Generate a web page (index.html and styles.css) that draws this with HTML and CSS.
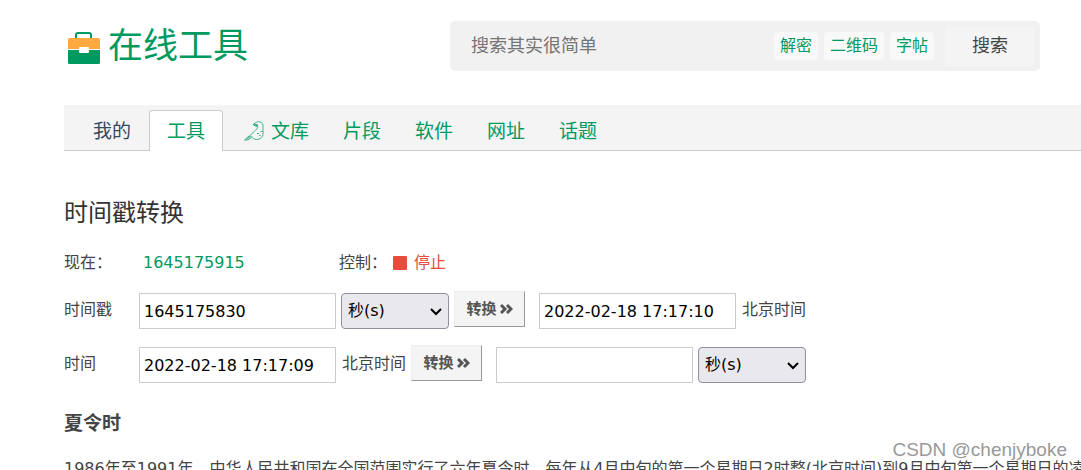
FILE: index.html
```html
<!DOCTYPE html>
<html lang="zh-CN">
<head>
  <meta charset="UTF-8">
  <meta name="viewport" content="width=device-width, initial-scale=1.0">
  <title>时间戳转换 - 在线工具</title>
  <link rel="stylesheet" href="styles.css">
</head>
<body>
  <header class="header">
    <a class="logo" href="#">
      <svg width="34" height="34" viewBox="0 0 34 34" aria-hidden="true">
        <path d="M10 7V4q0-2 2-2h11q2 0 2 2v3" fill="none" stroke="#009a61" stroke-width="2"/>
        <path d="M2 18V8.500Q2 7 3.500 7h29Q34 7 34 8.500V18z" fill="#ffa940"/>
        <path d="M2 19h32v12.500q0 1.500-1.500 1.500h-29Q2 33 2 31.500z" fill="#009a61"/>
        <rect x="13" y="16" width="10" height="6" rx="1" fill="#fff"/>
      </svg>
      <span>在线工具</span>
    </a>
    <form class="search">
      <input class="search-input" type="text" placeholder="搜索其实很简单" aria-label="搜索">
      <div class="search-tags">
        <a href="#">解密</a>
        <a href="#">二维码</a>
        <a href="#">字帖</a>
      </div>
      <button class="search-btn" type="button">搜索</button>
    </form>
  </header>

  <nav class="nav">
    <a class="mine" href="#">我的</a>
    <a class="active" href="#">工具</a>
    <a class="docs" href="#">
      <svg width="20" height="20" viewBox="0 0 20 20" fill="none" stroke="#3fb488" stroke-width="1" aria-hidden="true">
        <path d="M9 3.500L12 1.500C14 0 18 .5 19 4V13C19 16 16 18.500 12.500 18.500 10.500 18.500 9 17 7.500 16.500"/>
        <path d="M9 3.500h4.500C14.500 7 12 9 9.500 11L5 15.500"/>
        <path d="M5 15L.5 19H3.500L5 18.500 8 15.500M2 18.500L6 15M4 18.500L7.500 15"/>
        <path d="M9.500 4h3.500v1.500z" fill="#3fb488"/>
        <path d="M13 12.500h2M16.500 10.500h2M15 14.500h1.500"/>
      </svg>
      文库
    </a>
    <a href="#">片段</a>
    <a href="#">软件</a>
    <a href="#">网址</a>
    <a href="#">话题</a>
  </nav>

  <main class="main">
    <h1>时间戳转换</h1>

    <div class="status">
      <span class="label">现在：</span>
      <span class="now">1645175915</span>
      <span class="control">控制：</span>
      <button class="stop" type="button"><i></i>停止</button>
    </div>

    <!-- 时间戳转北京时间 -->
    <form class="row">
      <label class="label" for="stamp">时间戳</label>
      <input id="stamp" class="field" type="text" value="1645175830">
      <span class="select">
        <select aria-label="时间戳单位"><option>秒(s)</option><option>毫秒(ms)</option></select>
        <svg width="12" height="8" viewBox="0 0 12 8" aria-hidden="true"><path d="M1 1l5 5 5-5"/></svg>
      </span>
      <button class="convert" type="button">转换
        <svg width="13" height="12" viewBox="0 0 13 12" aria-hidden="true"><path d="M1 2l4 4-4 4M7 2l4 4-4 4"/></svg>
      </button>
      <input id="stampResult" class="field" type="text" value="2022-02-18 17:17:10">
      <label class="unit" for="stampResult">北京时间</label>
    </form>

    <!-- 北京时间转时间戳 -->
    <form class="row">
      <label class="label" for="time">时间</label>
      <input id="time" class="field" type="text" value="2022-02-18 17:17:09">
      <span class="unit">北京时间</span>
      <button class="convert" type="button">转换
        <svg width="13" height="12" viewBox="0 0 13 12" aria-hidden="true"><path d="M1 2l4 4-4 4M7 2l4 4-4 4"/></svg>
      </button>
      <input class="field" type="text" aria-label="转换结果">
      <span class="select">
        <select aria-label="结果单位"><option>秒(s)</option><option>毫秒(ms)</option></select>
        <svg width="12" height="8" viewBox="0 0 12 8" aria-hidden="true"><path d="M1 1l5 5 5-5"/></svg>
      </span>
    </form>

    <h2>夏令时</h2>
    <p>1986年至1991年，中华人民共和国在全国范围实行了六年夏令时，每年从4月中旬的第一个星期日2时整(北京时间)到9月中旬第一个星期日的凌晨</p>
  </main>

  <div class="watermark">CSDN @chenjyboke</div>
</body>
</html>
```

FILE: styles.css
```css
* { margin: 0; padding: 0; box-sizing: border-box; }

html, body { height: 100%; overflow: hidden; }

body {
  position: relative;
  padding-left: 64px;
  background: #fff;
  color: #444;
  font: 16px/24px "DejaVu Sans", "Noto Sans CJK SC", sans-serif;
}

a { color: #009a61; text-decoration: none; }

input, select, button { font: inherit; color: inherit; outline: none; }

button { cursor: pointer; }

/* 顶部 */
.header {
  display: flex;
  justify-content: space-between;
  align-items: center;
  padding: 21px 41px 0 2px;
}

.logo {
  display: flex;
  align-items: center;
  gap: 8px;
  font-size: 35px;
  line-height: 50px;
}
.logo svg { margin-top: 4px; }

.search {
  display: flex;
  align-items: center;
  width: 590px;
  height: 50px;
  padding: 0 5px 0 21px;
  background: #f1f1f1;
  border-radius: 5px;
}

.search-input {
  flex: 1;
  min-width: 0;
  border: 0;
  background: none;
  font-size: 18px;
}
.search-input::placeholder { color: #757575; }

.search-tags { display: flex; gap: 6px; }
.search-tags a {
  padding: 2px 6px;
  background: #f9f9f9;
  border-radius: 4px;
}

.search-btn {
  width: 90px;
  height: 40px;
  margin-left: 11px;
  border: 0;
  border-radius: 5px;
  background: #f4f4f4;
  font-size: 18px;
}

/* 导航 */
.nav {
  display: flex;
  align-items: flex-end;
  height: 46px;
  margin-top: 34px;
  padding-left: 12px;
  background: #f4f4f4;
  box-shadow: inset 0 -1px #ccc;
  font-size: 19px;
}
.nav a { padding: 0 17px; line-height: 40px; }
.nav .mine { padding-right: 18px; color: #34495e; }
.nav .active {
  background: #fff;
  border: 1px solid #ccc;
  border-bottom: 0;
  border-radius: 4px 4px 0 0;
}
.nav .docs {
  display: flex;
  align-items: center;
  gap: 7px;
  padding-left: 21px;
}

/* 内容 */
.main { padding-top: 44px; }

h1 {
  color: #333;
  font-size: 24px;
  font-weight: normal;
  line-height: 36px;
}

.label { width: 75px; }

.status {
  display: flex;
  align-items: center;
  margin: 20px 0 16px;
}
.now {
  width: 200px;
  padding-left: 4px;
  color: #009a61;
}
.control { width: 54px; }

.stop {
  display: flex;
  align-items: center;
  gap: 7px;
  border: 0;
  background: none;
  color: #e74c3c;
}
.stop i {
  width: 14px;
  height: 14px;
  border-radius: 1px;
  background: #e74c3c;
}

.row {
  display: flex;
  align-items: flex-end;
  height: 38px;
  margin-bottom: 16px;
}
.row .label, .row .unit { align-self: center; }

.field {
  width: 197px;
  height: 36px;
  padding: 0 4px;
  border: 1px solid #ccc;
  background: #fff;
  color: #000;
}

.select {
  position: relative;
  width: 108px;
  height: 36px;
  margin-left: 5px;
}
.select select {
  appearance: none;
  width: 100%;
  height: 100%;
  padding: 0 6px;
  border: 1px solid #8f8f9d;
  border-radius: 4px;
  background: #e9e9ed;
  color: #000;
}
.select svg {
  position: absolute;
  top: 15px;
  right: 7px;
  fill: none;
  stroke: #000;
  stroke-width: 2;
  pointer-events: none;
}

.unit { margin-left: 6px; }

.convert {
  display: flex;
  align-items: center;
  justify-content: center;
  align-self: flex-start;
  gap: 3px;
  width: 71px;
  height: 36px;
  margin: 0 14px 0 5px;
  border: 1px solid;
  border-color: #eee #999 #999 #eee;
  background: #f4f4f4;
  color: #555;
  font-size: 15px;
  font-weight: bold;
}
.convert svg { fill: none; stroke: #555; stroke-width: 3; }

h2 {
  margin: 28px 0 22px;
  font-size: 19px;
  line-height: 24px;
}

p { white-space: nowrap; }

/* 右下角水印 */
.watermark {
  position: absolute;
  right: 14px;
  bottom: 8px;
  color: #999;
  font: 19px/24px "Liberation Sans", sans-serif;
  text-shadow: 1px 1px #fff;
}
```
